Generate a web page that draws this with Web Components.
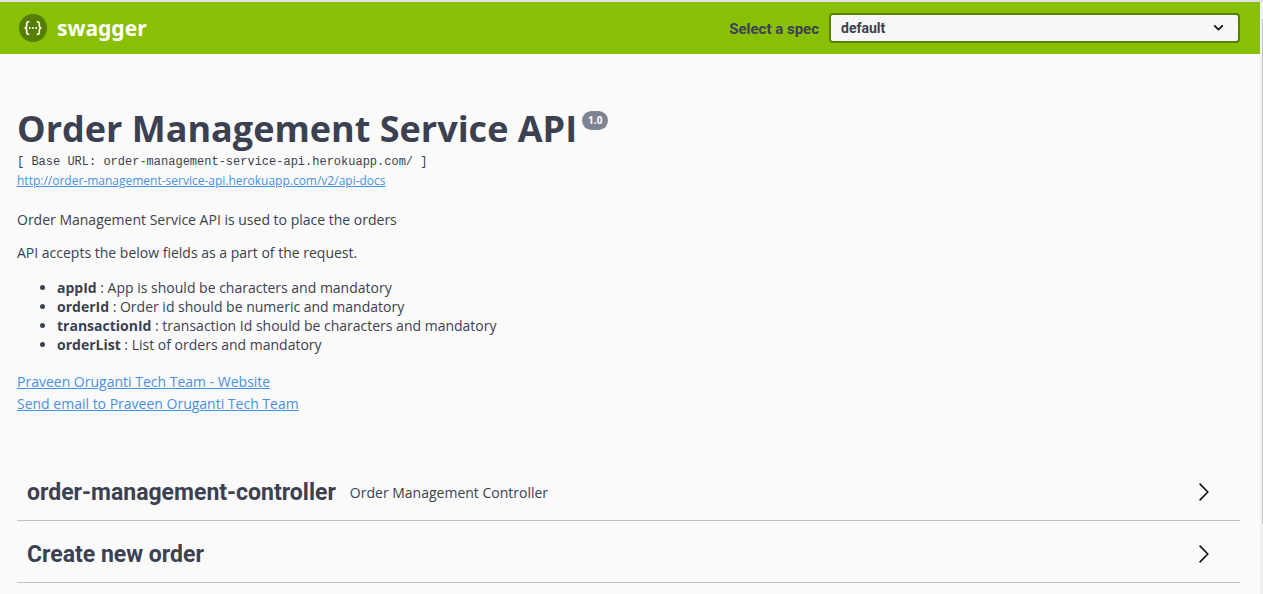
<!DOCTYPE html>
<html lang="en">
<head>
<meta charset="utf-8">
<title>Swagger UI</title>
<style>
  html { overflow: hidden; }
  body { margin: 0; background: #fafafa; color: #3b4151; font-family: "Open Sans", sans-serif; font-size: 14px; }
</style>
</head>
<body>
<api-shell>
  <swagger-topbar slot="top"></swagger-topbar>
  <api-info version="1.0" host="order-management-service-api.herokuapp.com/" docs="http://order-management-service-api.herokuapp.com/v2/api-docs">
    <span slot="title">Order Management Service API</span>
    <field-list></field-list>
    <contact-link slot="contact" href="#website">Praveen Oruganti Tech Team - Website</contact-link>
    <contact-link slot="contact" href="mailto:team@example.com">Send email to Praveen Oruganti Tech Team</contact-link>
  </api-info>
  <tag-section name="order-management-controller">Order Management Controller</tag-section>
  <tag-section name="Create new order"></tag-section>
</api-shell>

<script>
class Base extends HTMLElement {
  render(html) { this.attachShadow({ mode: "open" }).innerHTML = html; }
}

customElements.define("api-shell", class extends Base {
  connectedCallback() {
    this.render(`
      <style>
        :host { display: flex; min-height: 100vh; box-sizing: border-box; border-top: 2px solid #e2e2e6; }
        .page { flex: 1; min-width: 0; }
        main { padding: 0 20px 0 17px; }
        .rail { width: 3px; background: #f1f1f1; padding-top: 17px; box-sizing: border-box; }
        .thumb { width: 1px; margin-left: 2px; height: 85vh; background: #c1c1c1; }
      </style>
      <div class="page"><slot name="top"></slot><main><slot></slot></main></div>
      <div class="rail"><div class="thumb"></div></div>`);
  }
});

customElements.define("swagger-topbar", class extends Base {
  connectedCallback() {
    this.render(`
      <style>
        :host { display: block; background: #89bf04; }
        header { display: flex; align-items: center; justify-content: space-between; height: 52px; padding: 0 20px 0 18px; }
        .brand { display: flex; align-items: center; gap: 9px; color: #fff; text-decoration: none; font: 700 21px/30px "Noto Sans", sans-serif; }
        .brand svg { display: block; }
        form { display: flex; align-items: center; gap: 10px; justify-content: flex-end; }
        label { font: 700 15px/24px Roboto, sans-serif; white-space: nowrap; padding-top: 2px; }
        .field { position: relative; width: 411px; }
        select { display: block; appearance: none; width: 100%; height: 30px; padding: 0 40px 0 10px; border: 2px solid #547f00; border-radius: 4px; background: #f7f7f7; color: #3b4151; font: 700 14px/24px Roboto, sans-serif; }
        .field svg { position: absolute; right: 16px; top: 11px; pointer-events: none; }
      </style>
      <header>
        <a class="brand" href="#">
          <svg width="30" height="30" viewBox="0 0 30 30" aria-hidden="true">
            <circle cx="15" cy="15" r="14" fill="#547f00"/>
            <g fill="none" stroke="#fff" stroke-width="1.6">
              <path d="M11.3 8.8h-.8c-1.5 0-1.8.8-1.8 2v1.8c0 1.5-.6 2.3-2.1 2.4 1.5.1 2.1.9 2.1 2.4v1.8c0 1.2.3 2 1.8 2h.8"/>
              <path d="M18.7 8.8h.8c1.5 0 1.8.8 1.8 2v1.8c0 1.5.6 2.3 2.1 2.4-1.5.1-2.1.9-2.1 2.4v1.8c0 1.2-.3 2-1.8 2h-.8"/>
            </g>
            <g fill="#fff"><circle cx="11.8" cy="15" r="1"/><circle cx="15" cy="15" r="1"/><circle cx="18.2" cy="15" r="1"/></g>
          </svg>
          <span>swagger</span>
        </a>
        <form>
          <label for="spec">Select a spec</label>
          <div class="field">
            <select id="spec"><option>default</option></select>
            <svg width="11" height="8" viewBox="0 0 11 8" aria-hidden="true"><path d="M1.2 1.4 5.5 5.6 9.8 1.4" fill="none" stroke="#111" stroke-width="1.8"/></svg>
          </div>
        </form>
      </header>`);
  }
});

customElements.define("api-info", class extends Base {
  connectedCallback() {
    const docs = this.getAttribute("docs");
    this.render(`
      <style>
        :host { display: block; padding: 50px 0 50px; }
        h1 { display: flex; align-items: flex-start; gap: 5px; margin: 0; font: 700 36px/50px "Open Sans", sans-serif; }
        .version { margin-top: 7px; padding: 0 6px; border-radius: 10px; background: #7d8492; color: #fff; font: 700 10px/19px "Open Sans", sans-serif; }
        pre { margin: 0; font: 400 12px/16px "Liberation Mono", monospace; }
        a { display: block; width: fit-content; margin-top: 2px; font-size: 12px; line-height: 18px; color: #4990e2; }
        .contact { display: grid; gap: 3px; margin-top: 18px; }
      </style>
      <h1><slot name="title"></slot><span class="version">${this.getAttribute("version")}</span></h1>
      <pre>[ Base URL: ${this.getAttribute("host")} ]</pre>
      <a href="${docs}">${docs}</a>
      <slot></slot>
      <div class="contact"><slot name="contact"></slot></div>`);
  }
});

customElements.define("field-list", class extends Base {
  connectedCallback() {
    this.render(`
      <style>
        :host { display: block; margin-top: 20px; font-size: 14px; line-height: 19px; }
        p { margin: 0 0 14px; }
        ul { margin: 16px 0 0; padding-left: 40px; }
      </style>
      <p>Order Management Service API is used to place the orders</p>
      <p>API accepts the below fields as a part of the request.</p>
      <ul>
        <li><b>appId</b> : App is should be characters and mandatory</li>
        <li><b>orderId</b> : Order id should be numeric and mandatory</li>
        <li><b>transactionId</b> : transaction Id should be characters and mandatory</li>
        <li><b>orderList</b> : List of orders and mandatory</li>
      </ul>`);
  }
});

customElements.define("contact-link", class extends Base {
  connectedCallback() {
    this.render(`
      <style>
        :host { display: block; font-size: 14px; line-height: 19px; }
        a { color: #4990e2; }
      </style>
      <a href="${this.getAttribute("href")}"><slot></slot></a>`);
  }
});

customElements.define("tag-section", class extends Base {
  connectedCallback() {
    this.render(`
      <style>
        :host { display: block; border-bottom: 1px solid #bfc0c9; margin-bottom: 4px; }
        .row { display: flex; align-items: center; gap: 14px; height: 57px; padding: 0 26px 0 10px; }
        h2, small { padding-top: 3px; }
        h2 { margin: 0; font: 700 23px/32px Roboto, sans-serif; }
        small { flex: 1; font-size: 14px; line-height: 20px; }
        button { display: block; border: 0; padding: 0; background: none; }
        svg { display: block; }
      </style>
      <div class="row">
        <h2>${this.getAttribute("name")}</h2>
        <small><slot></slot></small>
        <button aria-label="Expand operation">
          <svg width="20" height="20" viewBox="0 0 20 20"><path d="M5.6 1.6 13.8 10 5.6 18.4" fill="none" stroke="#111" stroke-width="1.6"/></svg>
        </button>
      </div>`);
  }
});
</script>
</body>
</html>
